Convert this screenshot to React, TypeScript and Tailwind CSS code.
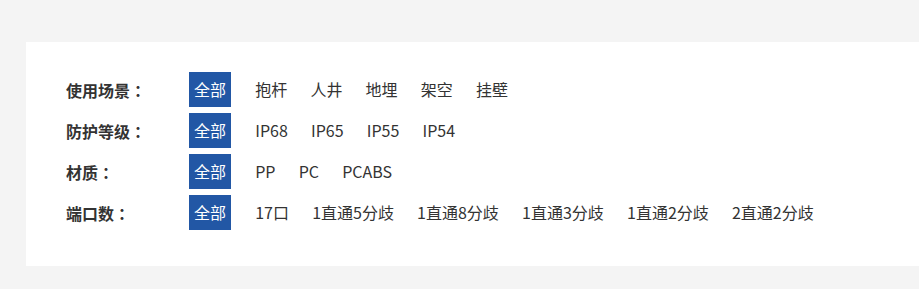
const filters = [
  { label: '使用场景', options: ['抱杆', '人井', '地埋', '架空', '挂壁'] },
  { label: '防护等级', options: ['IP68', 'IP65', 'IP55', 'IP54'] },
  { label: '材质', options: ['PP', 'PC', 'PCABS'] },
  { label: '端口数', options: ['17口', '1直通5分歧', '1直通8分歧', '1直通3分歧', '1直通2分歧', '2直通2分歧'] },
];

export default function App() {
  return (
    <div
      className="min-h-[289px] w-[919px] bg-[#f4f4f4] pt-[42px] pl-[26px]"
      style={{ fontFamily: '"Noto Sans CJK SC", "Noto Sans", sans-serif' }}
    >
      <div className="bg-white h-[224px] pl-[40px] pt-[30px] flex flex-col gap-[6px]">
        {filters.map((row) => (
          <div key={row.label} className="flex items-center h-[35px] text-[16px] text-[#333]">
            {/* Row label */}
            <div className="w-[123px] font-bold">
              {row.label}
              <span className="font-['Noto_Sans_CJK_TC',sans-serif]">：</span>
            </div>

            {/* Options */}
            <div className="flex items-center gap-[23.2px]">
              <span className="bg-[#2257a5] text-white px-[5px] mr-[1px] leading-[35px] h-[35px]">全部</span>
              {row.options.map((opt) => (
                <span key={opt} className="leading-[35px] cursor-pointer">
                  {opt}
                </span>
              ))}
            </div>
          </div>
        ))}
      </div>
    </div>
  );
}
